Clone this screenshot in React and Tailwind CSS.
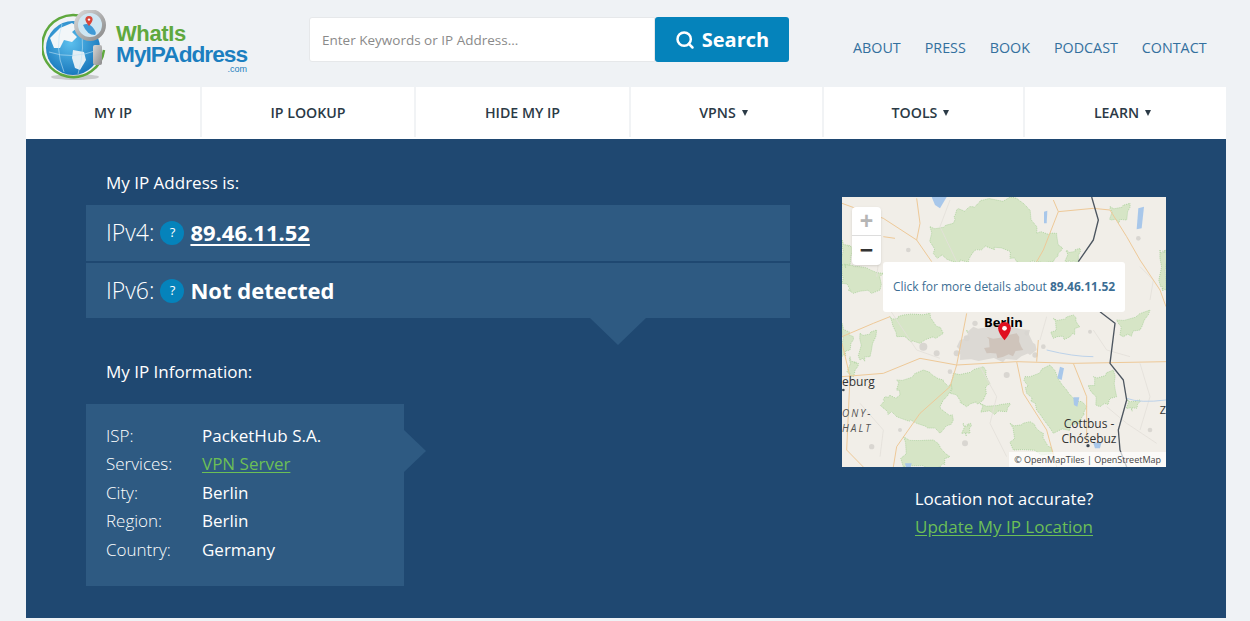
import { Search } from 'lucide-react'

const navItems = [
  { label: 'MY IP' },
  { label: 'IP LOOKUP' },
  { label: 'HIDE MY IP' },
  { label: 'VPNS', caret: true },
  { label: 'TOOLS', caret: true },
  { label: 'LEARN', caret: true },
]

const topLinks = ['ABOUT', 'PRESS', 'BOOK', 'PODCAST', 'CONTACT']

const info = [
  ['ISP:', 'PacketHub S.A.'],
  ['Services:', 'VPN Server', true],
  ['City:', 'Berlin'],
  ['Region:', 'Berlin'],
  ['Country:', 'Germany'],
]

// forest outlines, in the map's viewBox units
const forests = [
  [[270,110],[340,100],[350,60],[400,50],[430,30],[530,25],[560,50],[590,130],[650,130],[665,180],[640,215],[530,215],[500,180],[440,170],[400,185],[385,215],[340,215],[280,190]],
  [[6,210],[60,230],[130,250],[120,300],[40,310],[6,280]],
  [[150,380],[190,375],[270,370],[310,430],[240,460],[170,440]],
  [[640,385],[700,375],[720,410],[690,440],[640,445]],
  [[830,390],[930,360],[900,420],[850,440]],
  [[170,570],[250,540],[310,570],[340,590],[300,650],[340,690],[300,730],[230,700],[170,680],[125,650],[135,620],[180,615]],
  [[340,550],[430,530],[450,580],[430,630],[380,650],[330,610]],
  [[420,640],[510,640],[500,665],[430,665]],
  [[555,560],[630,525],[680,600],[740,650],[720,700],[640,730],[590,660],[560,610]],
  [[760,560],[820,540],[830,620],[780,650],[750,600]],
  [[510,700],[570,695],[610,730],[640,790],[520,780]],
  [[190,740],[280,750],[330,800],[300,831],[190,831]],
  [[6,400],[40,440],[30,480],[6,500]],
  [[810,50],[870,40],[860,90],[815,90]],
  [[60,430],[110,420],[90,500],[60,510]],
  [[680,180],[720,175],[715,215],[680,215]],
  [[380,420],[415,425],[410,450],[385,450]],
  [[370,700],[392,700],[390,730],[370,730]],
  [[860,625],[900,630],[890,655],[865,655]],
  [[960,180],[978,180],[978,300],[962,290]],
  [[6,150],[40,170],[30,225],[6,225]],
  [[30,500],[55,520],[40,560],[25,550]],
]

const roads = [
  'M6 40 L130 85 L230 150 L275 215',
  'M230 25 L240 100 L230 150',
  'M640 30 L655 65 L610 180 L590 215',
  'M655 65 L760 55 L810 60 L860 140 L900 210 L960 300 L978 350',
  'M6 560 L130 550 L240 505 L350 525 L530 515 L700 520 L978 515',
  'M350 525 L330 590 L240 670 L170 770 L160 831',
  'M530 515 L550 610 L620 720 L650 831',
  'M380 370 L350 525',
  'M595 450 L590 515',
  'M6 460 L30 560 L20 780 L70 831',
  'M700 520 L740 620 L740 760',
  'M130 140 L165 145',
  'M6 440 L100 400 L150 380',
]

const minorRoads = [
  'M60 60 L120 180 L110 260',
  'M330 30 L300 110 L350 215',
  'M900 230 L940 270 L930 330',
  'M130 330 L230 480 L300 505',
  'M620 380 L600 450',
  'M760 420 L800 480 L870 500',
  'M420 530 L470 620 L450 700 L500 800',
  'M800 650 L860 700 L950 760',
  'M60 640 L130 720 L120 800',
  'M900 520 L930 620 L900 720',
]

const towns = [
  [250,470,12],[290,490,9],[205,180,7],[95,770,8],[375,760,9],[895,145,7],[750,425,6],[640,285,5],[930,720,7],
  [180,720,6],[500,555,9],[330,545,7],[585,495,8],[380,445,9],[405,400,8],[610,470,7],[350,490,9],[560,430,7],
]

// breaks an outline up into short jittered steps so it looks like a traced forest edge
function wiggle(points) {
  let seed = 7
  const rand = () => {
    seed = (seed * 31 + 17) % 101
    return seed / 101 - 0.5
  }
  let d = ''
  points.forEach((p, i) => {
    const n = points[(i + 1) % points.length]
    for (let s = 0; s < 4; s++) {
      const t = s / 4
      const x = p[0] + (n[0] - p[0]) * t + (s ? rand() * 18 : 0)
      const y = p[1] + (n[1] - p[1]) * t + (s ? rand() * 18 : 0)
      d += `${i || s ? 'L' : 'M'}${x.toFixed(1)} ${y.toFixed(1)} `
    }
  })
  return d + 'Z'
}

function Logo() {
  return (
    <div className="flex items-start w-[206px]">
      <svg width="76" height="72" viewBox="0 0 76 72" className="shrink-0 mt-[10px]">
        <defs>
          <radialGradient id="globe" cx="45%" cy="40%" r="70%">
            <stop offset="0%" stopColor="#5cc0ee" />
            <stop offset="100%" stopColor="#0f6db5" />
          </radialGradient>
          <linearGradient id="lens" x1="0" y1="0" x2="1" y2="1">
            <stop offset="0%" stopColor="#d8d8d8" />
            <stop offset="100%" stopColor="#8a8a8a" />
          </linearGradient>
        </defs>
        <ellipse cx="33" cy="67" rx="24" ry="3" fill="#c8cacc" />
        <path d="M42 7 A31 31 0 1 0 62 40" fill="none" stroke="#5fa83e" strokeWidth="2.5" />
        <circle cx="31" cy="38" r="27" fill="url(#globe)" />
        <path d="M8 28 L18 18 L30 13 L36 17 L30 22 L35 27 L30 32 L22 30 L18 38 L12 38 Z" fill="#f2f6f8" />
        <path d="M31 40 L42 42 L44 50 L38 60 L33 58 L30 48 Z" fill="#e3eef4" />
        <path d="M7 42 Q30 50 56 40 M20 14 Q12 38 22 62 M38 12 Q44 38 36 64" fill="none" stroke="#bfe3f5" strokeWidth="0.6" />
        <rect x="51" y="35" width="9" height="20" rx="2" fill="url(#lens)" />
        <circle cx="48" cy="15" r="14" fill="#cfe6f2" stroke="url(#lens)" strokeWidth="4" />
        <path d="M41 15 Q47 12 52 19 Q55 23 53 25 Q45 25 41 15 Z" fill="#3f9ad6" />
        <path d="M47 6 a3.6 3.6 0 0 1 3.6 3.6 Q50.6 12 47 16 Q43.4 12 43.4 9.6 A3.6 3.6 0 0 1 47 6 Z" fill="#d8453a" />
        <circle cx="47" cy="9.6" r="1.2" fill="#fff" />
      </svg>
      <div className="font-['Liberation_Sans',sans-serif] font-bold -ml-[2px] mt-[24px] flex flex-col">
        <span className="text-[22px] leading-[20px] tracking-[-0.4px] text-[#5fa83e]">WhatIs</span>
        <span className="text-[22.7px] leading-[21px] tracking-[-1px] text-[#1c7fc0] whitespace-nowrap">MyIPAddress</span>
        <span className="text-[9px] leading-[9px] font-normal text-[#1c7fc0] text-right">.com</span>
      </div>
    </div>
  )
}

function Header() {
  return (
    <header className="h-[87px] pl-[42px] flex items-start">
      <Logo />
      <div className="flex ml-[61px] mt-[17px] h-[45px] w-[480px]">
        <div className="flex-1 bg-white border border-[#e6e8ea] rounded-l-[3px] pl-3 pt-[1px] flex items-center text-[13.5px] text-[#8a8a8a]">
          Enter Keywords or IP Address...
        </div>
        <button className="w-[134px] bg-[#0583bb] rounded-[3px] flex items-center justify-center gap-[7px] text-white font-bold text-[20px]">
          <Search size={20} strokeWidth={3} />
          Search
        </button>
      </div>
      <nav className="flex gap-6 ml-[64px] mt-[38px] text-[14.3px] leading-[20px] text-[#33709e]">
        {topLinks.map((l) => (
          <a key={l}>{l}</a>
        ))}
      </nav>
    </header>
  )
}

function MainNav() {
  return (
    <nav className="ml-[26px] w-[1200px] h-[52px] bg-white grid grid-cols-[176px_214px_215px_193px_201px_201px] pb-[2px]">
      {navItems.map((item, i) => (
        <div
          key={item.label}
          className={`flex items-center justify-center gap-[6px] pt-[1px] text-[14.2px] font-semibold text-[#2b3a46] ${i < 5 ? 'border-r-2 border-[#f1f3f5]' : ''} ${item.caret ? 'pr-[6px]' : ''}`}
        >
          {item.label}
          {item.caret && <span className="w-0 h-0 border-x-[3.5px] border-x-transparent border-t-[6px] border-t-[#2b3a46]" />}
        </div>
      ))}
    </nav>
  )
}

function HelpBadge() {
  return (
    <span className="w-6 h-6 rounded-full bg-[#0583bb] text-white text-[13px] font-normal flex items-center justify-center">?</span>
  )
}

function MapDrawing() {
  return (
    <svg viewBox="6 21 972 810" className="w-full h-full block">
      <rect x="6" y="21" width="972" height="810" fill="#f1eee8" />
      {forests.map((pts) => (
        <path key={pts[0].join()} d={wiggle(pts)} fill="#d6e5c6" stroke="#9cca8c" strokeWidth="2" strokeDasharray="3 3" strokeLinejoin="round" />
      ))}
      {minorRoads.map((d) => (
        <path key={d} d={d} fill="none" stroke="#e3e0da" strokeWidth="2.5" strokeLinejoin="round" />
      ))}
      <path d={wiggle([[400,410],[470,400],[570,420],[590,480],[530,510],[430,510],[360,510],[350,470]])} fill="#dcd9d4" />
      <path d={wiggle([[440,440],[530,430],[550,480],[490,500],[440,490]])} fill="#cfc4bb" />
      {towns.map(([x, y, r]) => (
        <circle key={`${x}-${y}`} cx={x} cy={y} r={r} fill="#d9d6d1" />
      ))}
      {roads.map((d) => (
        <path key={d} d={d} fill="none" stroke="#eec998" strokeWidth="3" strokeLinejoin="round" />
      ))}
      <path d="M275 21 L320 21 L300 55 L285 45 Z" fill="#a8c7ea" />
      <path d="M895 55 L912 50 L905 115 L890 118 Z" fill="#a8c7ea" />
      <path d="M612 65 L622 62 L620 100 L612 100 Z" fill="#a8c7ea" />
      <path d="M660 530 L672 535 L665 570 L652 565 Z" fill="#a8c7ea" />
      <path d="M700 622 L718 622 L712 650 L702 645 Z" fill="#a8c7ea" />
      <path d="M760 760 L785 755 L780 775 L765 775 Z" fill="#a8c7ea" />
      <path d="M195 820 L215 820 L212 831 L198 831 Z" fill="#a8c7ea" />
      <path d="M620 480 Q700 500 760 500 M860 625 Q900 640 978 630" fill="none" stroke="#bcd2ea" strokeWidth="3" />
      <path d="M755 21 L775 90 L760 150 L715 215 M780 365 L825 400 L820 440 L810 520 L850 570 L860 630 L835 720 L840 780 L860 831" fill="none" stroke="#4d5660" strokeWidth="4" strokeLinejoin="round" />
      <circle cx="10" cy="600" r="4" fill="#3c4650" />
      <circle cx="744" cy="767" r="5" fill="#3c4650" />
    </svg>
  )
}

function MapCard() {
  return (
    <div className="relative w-[324px] h-[270px] overflow-hidden">
      <MapDrawing />
      <div className="absolute left-[10px] top-[10px] w-[29px] h-[58px] bg-white rounded-[4px] shadow-sm flex flex-col items-center font-['Liberation_Sans',sans-serif] font-bold text-[23px] leading-none">
        <span className="h-[29px] w-full flex items-center justify-center border-b border-[#ddd] text-[#b5b5b5]">+</span>
        <span className="h-[29px] w-full flex items-center justify-center text-[#333]">−</span>
      </div>
      <div className="absolute left-[142px] top-[119px] text-[13px] font-bold leading-none text-black">Berlin</div>
      <div className="absolute left-[41px] top-[65px] w-[242px] h-[50px] bg-white rounded-[3px] flex items-center justify-center text-[12px] text-[#3c6e94] whitespace-nowrap">
        <span>Click for more details about <b className="font-bold">89.46.11.52</b></span>
      </div>
      <svg width="15" height="19" viewBox="0 0 18 24" className="absolute left-[155px] top-[125px]">
        <path d="M9 0 a8 8 0 0 1 8 8 Q17 14 9 23 Q1 14 1 8 A8 8 0 0 1 9 0 Z" fill="#e0101f" />
        <circle cx="9" cy="8" r="3" fill="#fff" />
      </svg>
      <div className="absolute left-0 top-[179px] text-[12px] leading-none text-[#333]">eburg</div>
      <div className="absolute left-0 top-[209px] text-[10px] leading-[15px] italic tracking-[2px] text-[#555]">
        <div>ONY-</div>
        <div>HALT</div>
      </div>
      <div className="absolute left-[215px] top-[219px] w-[64px] text-[12px] leading-[15px] text-center text-[#333]">
        <div>Cottbus -</div>
        <div>Chóśebuz</div>
      </div>
      <div className="absolute right-0 top-[207px] text-[11px] leading-none text-[#333]">Z</div>
      <div className="absolute right-0 bottom-0 bg-white/70 px-[5px] h-[15px] flex items-center text-[9px] text-[#444] whitespace-nowrap">
        © OpenMapTiles | OpenStreetMap
      </div>
    </div>
  )
}

export default function App() {
  return (
    <div className="w-[1250px] h-[621px] overflow-hidden bg-[#eff2f5] font-['Open_Sans',sans-serif]">
      <Header />
      <MainNav />
      <main className="ml-[26px] w-[1200px] h-[479px] bg-[#1f4871] text-white pl-[60px] pr-[60px] flex justify-between">
        <div className="w-[704px] flex flex-col items-start">
          <p className="mt-[33px] ml-5 text-[17px] leading-[22px]">My IP Address is:</p>
          <div className="mt-[11px] w-full h-[56px] bg-[#2e5a82] pl-5 pb-[1px] flex items-center gap-[6px]">
            <span className="text-[23px] font-light">IPv4:</span>
            <HelpBadge />
            <a className="text-[22px] font-bold underline underline-offset-[3px]">89.46.11.52</a>
          </div>
          <div className="mt-[2px] w-full h-[55px] bg-[#2e5a82] pl-5 flex items-center gap-[6px]">
            <span className="text-[23px] font-light">IPv6:</span>
            <HelpBadge />
            <span className="text-[22px] font-bold">Not detected</span>
          </div>
          <div className="ml-[504px] w-0 h-0 border-x-[28px] border-x-transparent border-t-[27px] border-t-[#2e5a82]" />
          <p className="mt-[16px] ml-5 text-[17px] leading-[22px]">My IP Information:</p>
          <div className="mt-[21px] relative w-[318px] h-[182px] bg-[#2e5a82] pl-5 pt-[17px]">
            {info.map(([k, v, link]) => (
              <div key={k} className="flex h-[28.5px] items-center text-[17px]">
                <span className="w-[96px] font-light">{k}</span>
                {link ? <a className="text-[#6cbf56] underline underline-offset-2">{v}</a> : <span>{v}</span>}
              </div>
            ))}
            <div className="absolute left-full top-[26px] w-0 h-0 border-y-[21px] border-y-transparent border-l-[22px] border-l-[#2e5a82]" />
          </div>
        </div>
        <div className="w-[324px] mt-[58px] flex flex-col items-center">
          <MapCard />
          <p className="mt-[20px] text-[17px] leading-[24px]">Location not accurate?</p>
          <a className="mt-[4px] text-[17px] leading-[24px] text-[#6cbf56] underline underline-offset-2">Update My IP Location</a>
        </div>
      </main>
    </div>
  )
}
